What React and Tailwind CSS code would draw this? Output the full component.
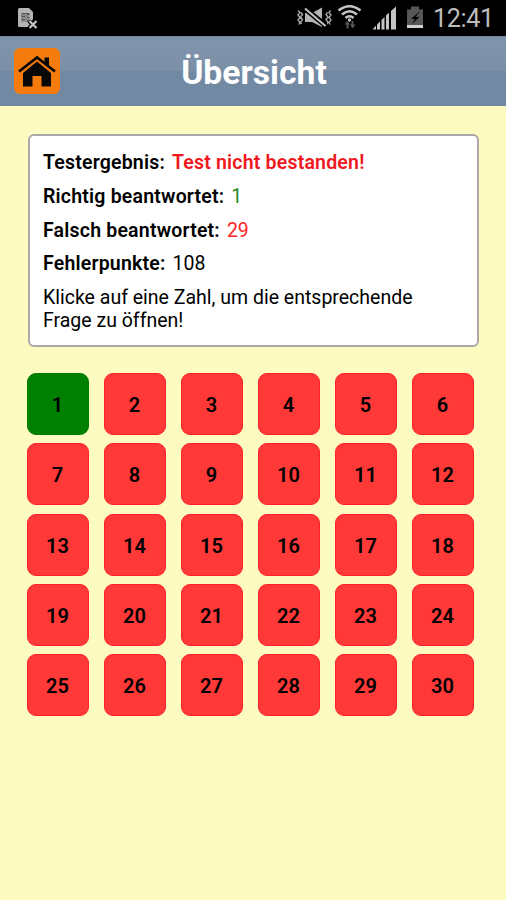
const numbers = Array.from({ length: 30 }, (_, i) => i + 1);

function SimIcon() {
  return (
    <svg width="22" height="23" viewBox="0 0 22 23" className="ml-[17px]">
      <path d="M1 2.500Q1 1 2.500 1H12L16 5V12L11 20H2.500Q1 20 1 18.500Z" fill="#b4b4b4" />
      <path d="M4.500 6h8v9h-8z" fill="#555" />
      <path d="M5 8h3M5 11h3M5 14h3M9 7v8M10 9h3M10 12h3" stroke="#bdbdbd" strokeWidth="1" />
      <path d="M12 14l8 7M20 14l-8 7" stroke="#000" strokeWidth="4" />
      <path d="M12.500 14l7 7M19.500 14l-7 7" stroke="#c4c4c4" strokeWidth="2.200" />
    </svg>
  );
}

function StatusIcons() {
  return (
    <svg width="130" height="36" viewBox="296 0 130 36" fill="none">
      <g stroke="#a8a8a8" strokeWidth="1.400">
        <path d="M298 10.500l2 2-2 2.500 2 2.500-2 2.500 2 2.500-1 2M301 12.500l1.500 2-2 2.500 2 2.500-2 2.500 1 2" />
        <path d="M327.500 12.500l-1.500 2 2 2.500-2 2.500 2 2.500-1 2M330.500 10.500l-1.500 2 2 2.500-2 2.500 2 2.500-2 2.500 1 2" />
      </g>
      <path d="M305 13h7l10-5.500v19.500l-10-5h-7z" fill="#b4b4b4" />
      <path d="M305 8.500l20.500 17" stroke="#000" strokeWidth="5.500" />
      <path d="M305 8.500l20.500 17.500" stroke="#bebebe" strokeWidth="2.200" />
      <g stroke="#c4c4c4" strokeWidth="2.600">
        <path d="M338.500 10.500Q349.500 2 360.500 10.500" />
        <path d="M342 14.500Q349.500 8 357 14.500" />
        <path d="M345.500 18Q349.500 14.500 353.500 18" />
      </g>
      <circle cx="349.500" cy="20" r="1.700" fill="#c4c4c4" />
      <path d="M344.500 24.500l3-3.500 2.500 3.500h-1.500v4h-2v-4zM350 24.500h1.500v-3.500h2v3.500h2l-3 4z" fill="#565656" />
      <path d="M372.500 29.500l3.500-4v4zM377 29.500v-5l3-3v8zM381.500 29.500v-9.500l3-3v12.500zM386 29.500v-14l3-3v17zM391 29.500V11l5-4.500v23z" fill="#c4c4c4" />
      <path d="M407 9.500h4V6.500h8v3h4V28h-16z" fill="#565656" />
      <path d="M419 12l-8 7h4l-3 5 7.500-7h-4l4-5z" fill="#000" />
      <path d="M407 25h16v3h-16z" fill="#d2d2d2" />
    </svg>
  );
}

function HomeIcon() {
  return (
    <svg width="38" height="34" viewBox="0 0 38 34">
      <path d="M5 19L19 7.500 33 19V32.500H23.500V22H14.500V32.500H5z" fill="#080808" />
      <path d="M1 17.500L19 3.500 37 17.500" fill="none" stroke="#080808" strokeWidth="2.600" />
      <path d="M26.500 3.500H31V12L26.500 8.500z" fill="#080808" />
    </svg>
  );
}

function ResultRow({ label, value, valueClass }) {
  return (
    <div className="h-[33.8px] whitespace-pre">
      <span className="font-semibold tracking-[0.2px]">{label}</span>
      <span className={"ml-[7px] " + valueClass}>{value}</span>
    </div>
  );
}

export default function App() {
  return (
    <div className="flex h-[900px] w-[506px] flex-col overflow-hidden bg-[#fefbc1] font-['Roboto','Liberation_Sans',sans-serif] text-black">
      <div className="flex h-9 shrink-0 items-center justify-between bg-black">
        <SimIcon />
        <div className="flex items-center pr-[13px]">
          <StatusIcons />
          <span className="ml-[7px] w-[60px] whitespace-nowrap pt-[2px] text-[25.200px] leading-9 tracking-[-0.4px] text-[#bebebe]">12:41</span>
        </div>
      </div>

      <header className="grid h-[70px] shrink-0 grid-cols-[60px_1fr_60px] items-center border-t border-[#76869a] bg-linear-to-b from-[#8094ac] from-0% via-[#7b90a7] via-50% to-[#7289a3] to-50%">
        <button aria-label="Home" className="mb-0.5 ml-3.5 flex h-[46px] w-[46px] items-center justify-center rounded-md bg-[#f47b0c]">
          <HomeIcon />
        </button>
        <h1 className="pt-0.5 pl-0.5 text-center text-[33.700px] leading-10 font-bold text-white">Übersicht</h1>
      </header>

      <main className="pt-7">
        <section className="ml-7 h-[213px] w-[451px] rounded-[6px] border-2 border-[#aaa8a8] bg-white px-[13px] pt-[15px] text-[19.500px] leading-[23px]">
          <ResultRow label="Testergebnis:" value="Test nicht bestanden!" valueClass="font-semibold tracking-[0.2px] text-[#f01820]" />
          <ResultRow label="Richtig beantwortet:" value="1" valueClass="text-[#228b22]" />
          <ResultRow label="Falsch beantwortet:" value="29" valueClass="text-[#ff2525]" />
          <ResultRow label="Fehlerpunkte:" value="108" valueClass="" />
          <p>Klicke auf eine Zahl, um die entsprechende<br />Frage zu öffnen!</p>
        </section>

        <div className="mt-[26px] ml-[26.500px] grid w-[447px] grid-cols-6 gap-x-[15px] gap-y-[8.300px]">
          {numbers.map((n) => (
            <button
              key={n}
              className={
                "h-[62px] rounded-[9px] border pt-0.5 text-[20px] font-semibold " +
                (n === 1 ? "border-[#007c00] bg-[#008000]" : "border-[#ff2028] bg-[#ff3838]")
              }
            >
              {n}
            </button>
          ))}
        </div>
      </main>
    </div>
  );
}
